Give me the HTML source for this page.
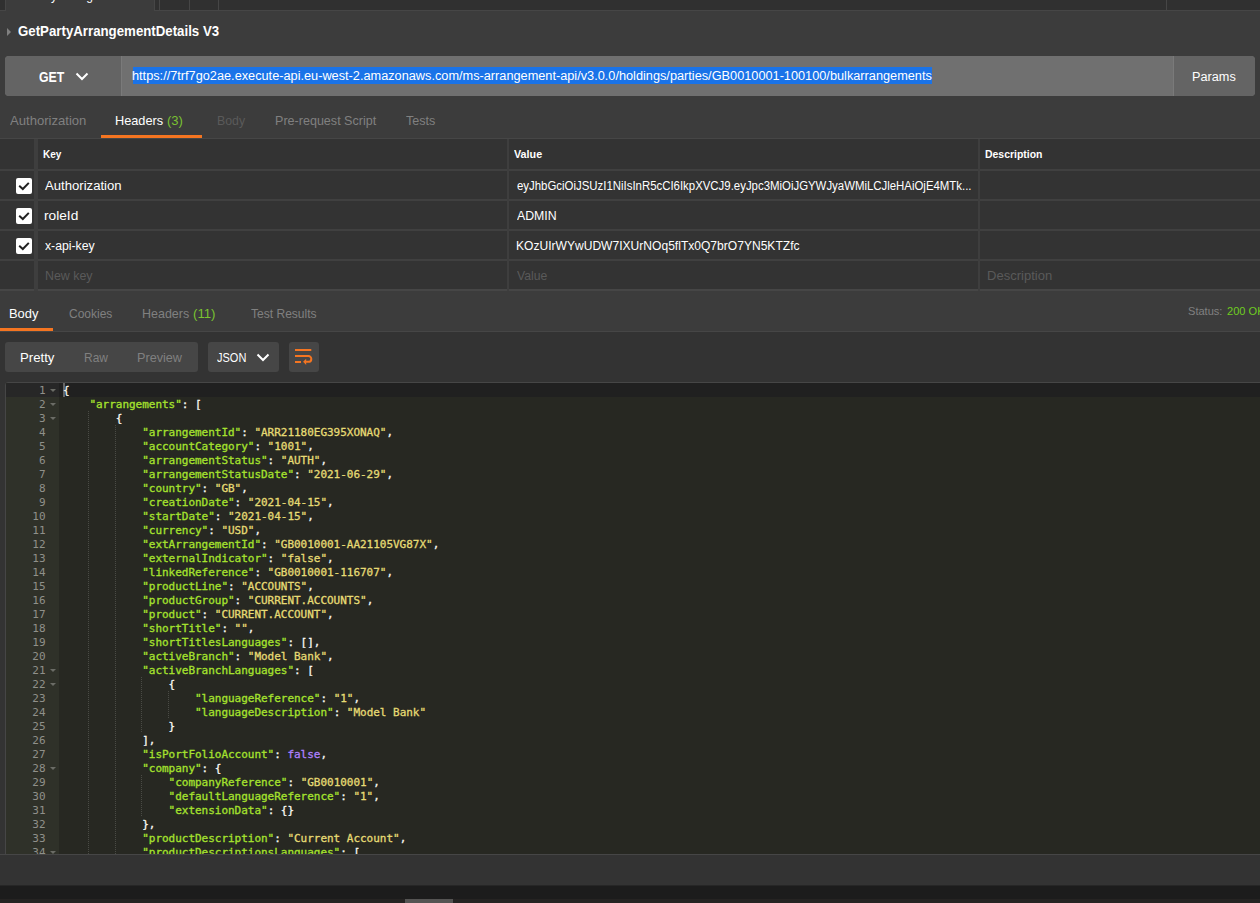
<!DOCTYPE html>
<html><head><meta charset="utf-8"><title>Postman</title>
<style>
*{box-sizing:border-box;margin:0;padding:0}
html,body{width:1260px;height:903px;overflow:hidden;background:#3c3c3c;font-family:"Liberation Sans",sans-serif;color:#fff}
.abs,#root div,#root span.a{position:absolute}
#root{position:relative;width:1260px;height:903px;overflow:hidden;background:#3c3c3c}
#tabstrip{left:0;top:0;width:1260px;height:11px;background:#303030;border-bottom:1px solid #464646}
#acttab{left:5px;top:0;width:150px;height:11px;background:#3c3c3c;border-left:1px solid #464646;border-right:1px solid #464646;overflow:hidden}
#acttab span{position:absolute;left:3.6px;top:-10.2px;font-size:12px;line-height:12px;color:#fff;white-space:nowrap}
.tsep{top:0;width:1px;height:10px;background:#464646}
#tri{left:7px;top:28px;width:0;height:0;border-left:4px solid #808080;border-top:4px solid transparent;border-bottom:4px solid transparent}
#title{left:18px;top:22px;font-size:14px;font-weight:bold;line-height:18px;white-space:nowrap;color:#fff}
#urlbar{left:5px;top:56px;width:1250px;height:40px;background:#707070;border-radius:4px;overflow:hidden}
#method{left:0;top:0;width:117px;height:40px;background:#646464;border-right:1px solid #7a7a7a}
#method span{position:absolute;left:34px;top:11px;font-size:14px;font-weight:bold;line-height:18px}
#params{left:1168px;top:0;width:82px;height:40px;background:#646464;border-left:1px solid #7a7a7a}
#params span{position:absolute;left:19px;top:12px;font-size:12px;line-height:16px}
#sel{left:128px;top:11px;height:17px;width:799px;background:#1a73e8}
#url{left:128px;top:11px;height:17px;line-height:17px;font-size:12px;white-space:nowrap;color:#fff}
.rt{top:112px;font-size:13px;line-height:16px;white-space:nowrap;color:#808080}
#reqline{left:0;top:138px;width:1260px;height:1px;background:#464646}
.orange{background:#f57521}
.green{color:#7ac231}
#table{left:0;top:139px;width:1260px;height:152px;background:#333}
.hl{left:0;width:1260px;height:2px;background:#404040}
.vl{top:0;width:2px;height:152px;background:#3e3e3e}
.th{top:9px;font-size:11px;font-weight:bold;line-height:14px;color:#fff;white-space:nowrap}
.td{font-size:12px;line-height:16px;color:#fff;white-space:nowrap}
.ph{color:#5a5a5a}
.cb{left:16px;width:16px;height:16px;background:#fff;border-radius:2px}
#resptabs{left:0;top:291px;width:1260px;height:41px;background:#3c3c3c;border-bottom:1px solid #464646}
.rs{top:14px;font-size:13px;line-height:16px;white-space:nowrap;color:#808080}
#toolbar{left:0;top:332px;width:1260px;height:554px;background:#333}
.btn{top:10px;height:30px;background:#464646;border-radius:3px}
.btn span{position:absolute;top:7px;font-size:13px;line-height:16px;white-space:nowrap}
#edwrap{left:5px;top:382px;width:1260px;height:473px;border:1px solid #464646;border-radius:3px 0 0 0;background:#272822;overflow:hidden}
#editor{left:0;top:0;width:1258px;height:471px;background:#272822;overflow:hidden;font-family:"DejaVu Sans Mono","Liberation Mono",monospace;font-size:11px;letter-spacing:-0.0225px}
#gutter{left:0;top:0;width:53px;height:471px;background:#2f3129}
#actline{left:0;top:0;width:1258px;height:14px;background:#202020}
#gactline{left:0;top:0;width:53px;height:14px;background:#272727}
#cursor{left:57px;top:0;width:2px;height:14px;background:#666}
.ln{margin-top:1px;left:0;width:39.5px;text-align:right;color:#8f908a;height:14px;line-height:14px;font-size:11px}
.fold{left:44px;width:0;height:0;border-top:3px solid #6b6c66;border-left:3px solid transparent;border-right:3px solid transparent}
.cl{-webkit-text-stroke:0.3px;margin-top:1px;left:57px;height:14px;line-height:14px;white-space:pre;color:#f8f8f2;font-size:11px}
.ig{width:1px;height:14px;background-image:linear-gradient(#4a4b45 50%,transparent 50%);background-size:1px 2px}
.k{color:#a6e22e}.s{color:#e6db74}.c{color:#ae81ff}
#foot{left:0;top:854px;width:1260px;height:32px;background:#333;border-top:1px solid #464646}
#task{left:0;top:885px;width:1260px;height:18px;background:#1c1c1c;border-top:1px solid #262626}
#task2{left:0;top:899px;width:1260px;height:4px;background:#252322}
#taskblk{left:405px;top:899px;width:48px;height:4px;background:#555453}

.tx{white-space:nowrap;transform-origin:0 0}

</style></head><body>
<div id="root">
<div id="tabstrip"></div>
<div id="acttab"><span>GetPartyArrangementDet</span></div>
<div class="tsep" style="left:159px"></div>
<div class="tsep" style="left:189px"></div>
<div class="tsep" style="left:218px"></div>
<div class="tsep" style="left:1166px"></div>
<div id="tri"></div>
<div id="urlbar">
 <div id="method">
  <svg style="position:absolute;left:70px;top:16px" width="14" height="10" viewBox="0 0 14 10"><path d="M1.5 1.5 L7 7 L12.5 1.5" fill="none" stroke="#fff" stroke-width="2"/></svg>
 </div>
 <div id="sel"></div>
 <div id="params"></div>
</div>
<div id="reqline"></div>
<div class="orange" style="left:101px;top:135px;width:101px;height:3px"></div>
<div id="table">
 <div class="hl" style="top:30px"></div>
 <div class="hl" style="top:60px"></div>
 <div class="hl" style="top:90px"></div>
 <div class="hl" style="top:120px"></div>
 <div class="hl" style="top:150px;background:#464646"></div>
 <div class="vl" style="left:34px;width:4px"></div>
 <div class="vl" style="left:507px;width:2px"></div>
 <div class="vl" style="left:978px;width:2px"></div>
 <div class="cb" style="top:39px"><svg width="16" height="16" viewBox="0 0 16 16"><path d="M3.2 7.8 L6.8 11 L12.8 4.9" fill="none" stroke="#222" stroke-width="2"/></svg></div>
 <div class="cb" style="top:69px"><svg width="16" height="16" viewBox="0 0 16 16"><path d="M3.2 7.8 L6.8 11 L12.8 4.9" fill="none" stroke="#222" stroke-width="2"/></svg></div>
 <div class="cb" style="top:99px"><svg width="16" height="16" viewBox="0 0 16 16"><path d="M3.2 7.8 L6.8 11 L12.8 4.9" fill="none" stroke="#222" stroke-width="2"/></svg></div>
</div>
<div id="resptabs">
 <div class="orange" style="left:0;top:37px;width:53px;height:3px"></div>
</div>
<div id="toolbar">
 <div class="btn" style="left:5px;width:193px"></div>
 <div class="btn" style="left:208px;width:71px">
  <svg style="position:absolute;left:48px;top:11px" width="14" height="10" viewBox="0 0 14 10"><path d="M1.5 1.5 L7 7 L12.5 1.5" fill="none" stroke="#fff" stroke-width="2"/></svg>
 </div>
 <div class="btn" style="left:289px;width:30px">
  <svg style="position:absolute;left:0;top:0" width="30" height="30" viewBox="0 0 30 30"><path d="M6 8 H22.3 M6 14 H19.4 a2.9 2.9 0 0 1 0 5.8 H16.5 M6 19.9 H12" fill="none" stroke="#f57521" stroke-width="2"/><path d="M14.1 19.8 L17.2 16.7 V22.9 Z" fill="#f57521"/></svg>
 </div>
</div>
<div id="edwrap"><div id="editor">
 <div id="actline"></div>
 <div id="gutter"></div>
 <div id="gactline"></div>
 <div id="cursor"></div>
<div class="ln" style="top:0px">1</div>
<div class="fold" style="top:6px"></div>
<div class="ln" style="top:14px">2</div>
<div class="fold" style="top:20px"></div>
<div class="ln" style="top:28px">3</div>
<div class="fold" style="top:34px"></div>
<div class="ln" style="top:42px">4</div>
<div class="ln" style="top:56px">5</div>
<div class="ln" style="top:70px">6</div>
<div class="ln" style="top:84px">7</div>
<div class="ln" style="top:98px">8</div>
<div class="ln" style="top:112px">9</div>
<div class="ln" style="top:126px">10</div>
<div class="ln" style="top:140px">11</div>
<div class="ln" style="top:154px">12</div>
<div class="ln" style="top:168px">13</div>
<div class="ln" style="top:182px">14</div>
<div class="ln" style="top:196px">15</div>
<div class="ln" style="top:210px">16</div>
<div class="ln" style="top:224px">17</div>
<div class="ln" style="top:238px">18</div>
<div class="ln" style="top:252px">19</div>
<div class="ln" style="top:266px">20</div>
<div class="ln" style="top:280px">21</div>
<div class="fold" style="top:286px"></div>
<div class="ln" style="top:294px">22</div>
<div class="fold" style="top:300px"></div>
<div class="ln" style="top:308px">23</div>
<div class="ln" style="top:322px">24</div>
<div class="ln" style="top:336px">25</div>
<div class="ln" style="top:350px">26</div>
<div class="ln" style="top:364px">27</div>
<div class="ln" style="top:378px">28</div>
<div class="fold" style="top:384px"></div>
<div class="ln" style="top:392px">29</div>
<div class="ln" style="top:406px">30</div>
<div class="ln" style="top:420px">31</div>
<div class="ln" style="top:434px">32</div>
<div class="ln" style="top:448px">33</div>
<div class="ln" style="top:462px">34</div>
<div class="fold" style="top:468px"></div>
<div class="cl" style="top:0px">{</div>
<div class="cl" style="top:14px">    <span class="k">"arrangements"</span>: [</div>
<div class="cl" style="top:28px">        {</div>
<div class="ig" style="left:82.4px;top:28px"></div>
<div class="cl" style="top:42px">            <span class="k">"arrangementId"</span>: <span class="s">"ARR21180EG395XONAQ"</span>,</div>
<div class="ig" style="left:82.4px;top:42px"></div>
<div class="ig" style="left:108.8px;top:42px"></div>
<div class="cl" style="top:56px">            <span class="k">"accountCategory"</span>: <span class="s">"1001"</span>,</div>
<div class="ig" style="left:82.4px;top:56px"></div>
<div class="ig" style="left:108.8px;top:56px"></div>
<div class="cl" style="top:70px">            <span class="k">"arrangementStatus"</span>: <span class="s">"AUTH"</span>,</div>
<div class="ig" style="left:82.4px;top:70px"></div>
<div class="ig" style="left:108.8px;top:70px"></div>
<div class="cl" style="top:84px">            <span class="k">"arrangementStatusDate"</span>: <span class="s">"2021-06-29"</span>,</div>
<div class="ig" style="left:82.4px;top:84px"></div>
<div class="ig" style="left:108.8px;top:84px"></div>
<div class="cl" style="top:98px">            <span class="k">"country"</span>: <span class="s">"GB"</span>,</div>
<div class="ig" style="left:82.4px;top:98px"></div>
<div class="ig" style="left:108.8px;top:98px"></div>
<div class="cl" style="top:112px">            <span class="k">"creationDate"</span>: <span class="s">"2021-04-15"</span>,</div>
<div class="ig" style="left:82.4px;top:112px"></div>
<div class="ig" style="left:108.8px;top:112px"></div>
<div class="cl" style="top:126px">            <span class="k">"startDate"</span>: <span class="s">"2021-04-15"</span>,</div>
<div class="ig" style="left:82.4px;top:126px"></div>
<div class="ig" style="left:108.8px;top:126px"></div>
<div class="cl" style="top:140px">            <span class="k">"currency"</span>: <span class="s">"USD"</span>,</div>
<div class="ig" style="left:82.4px;top:140px"></div>
<div class="ig" style="left:108.8px;top:140px"></div>
<div class="cl" style="top:154px">            <span class="k">"extArrangementId"</span>: <span class="s">"GB0010001-AA21105VG87X"</span>,</div>
<div class="ig" style="left:82.4px;top:154px"></div>
<div class="ig" style="left:108.8px;top:154px"></div>
<div class="cl" style="top:168px">            <span class="k">"externalIndicator"</span>: <span class="s">"false"</span>,</div>
<div class="ig" style="left:82.4px;top:168px"></div>
<div class="ig" style="left:108.8px;top:168px"></div>
<div class="cl" style="top:182px">            <span class="k">"linkedReference"</span>: <span class="s">"GB0010001-116707"</span>,</div>
<div class="ig" style="left:82.4px;top:182px"></div>
<div class="ig" style="left:108.8px;top:182px"></div>
<div class="cl" style="top:196px">            <span class="k">"productLine"</span>: <span class="s">"ACCOUNTS"</span>,</div>
<div class="ig" style="left:82.4px;top:196px"></div>
<div class="ig" style="left:108.8px;top:196px"></div>
<div class="cl" style="top:210px">            <span class="k">"productGroup"</span>: <span class="s">"CURRENT.ACCOUNTS"</span>,</div>
<div class="ig" style="left:82.4px;top:210px"></div>
<div class="ig" style="left:108.8px;top:210px"></div>
<div class="cl" style="top:224px">            <span class="k">"product"</span>: <span class="s">"CURRENT.ACCOUNT"</span>,</div>
<div class="ig" style="left:82.4px;top:224px"></div>
<div class="ig" style="left:108.8px;top:224px"></div>
<div class="cl" style="top:238px">            <span class="k">"shortTitle"</span>: <span class="s">""</span>,</div>
<div class="ig" style="left:82.4px;top:238px"></div>
<div class="ig" style="left:108.8px;top:238px"></div>
<div class="cl" style="top:252px">            <span class="k">"shortTitlesLanguages"</span>: [],</div>
<div class="ig" style="left:82.4px;top:252px"></div>
<div class="ig" style="left:108.8px;top:252px"></div>
<div class="cl" style="top:266px">            <span class="k">"activeBranch"</span>: <span class="s">"Model Bank"</span>,</div>
<div class="ig" style="left:82.4px;top:266px"></div>
<div class="ig" style="left:108.8px;top:266px"></div>
<div class="cl" style="top:280px">            <span class="k">"activeBranchLanguages"</span>: [</div>
<div class="ig" style="left:82.4px;top:280px"></div>
<div class="ig" style="left:108.8px;top:280px"></div>
<div class="cl" style="top:294px">                {</div>
<div class="ig" style="left:82.4px;top:294px"></div>
<div class="ig" style="left:108.8px;top:294px"></div>
<div class="ig" style="left:135.2px;top:294px"></div>
<div class="cl" style="top:308px">                    <span class="k">"languageReference"</span>: <span class="s">"1"</span>,</div>
<div class="ig" style="left:82.4px;top:308px"></div>
<div class="ig" style="left:108.8px;top:308px"></div>
<div class="ig" style="left:135.2px;top:308px"></div>
<div class="ig" style="left:161.6px;top:308px"></div>
<div class="cl" style="top:322px">                    <span class="k">"languageDescription"</span>: <span class="s">"Model Bank"</span></div>
<div class="ig" style="left:82.4px;top:322px"></div>
<div class="ig" style="left:108.8px;top:322px"></div>
<div class="ig" style="left:135.2px;top:322px"></div>
<div class="ig" style="left:161.6px;top:322px"></div>
<div class="cl" style="top:336px">                }</div>
<div class="ig" style="left:82.4px;top:336px"></div>
<div class="ig" style="left:108.8px;top:336px"></div>
<div class="ig" style="left:135.2px;top:336px"></div>
<div class="cl" style="top:350px">            ],</div>
<div class="ig" style="left:82.4px;top:350px"></div>
<div class="ig" style="left:108.8px;top:350px"></div>
<div class="cl" style="top:364px">            <span class="k">"isPortFolioAccount"</span>: <span class="c">false</span>,</div>
<div class="ig" style="left:82.4px;top:364px"></div>
<div class="ig" style="left:108.8px;top:364px"></div>
<div class="cl" style="top:378px">            <span class="k">"company"</span>: {</div>
<div class="ig" style="left:82.4px;top:378px"></div>
<div class="ig" style="left:108.8px;top:378px"></div>
<div class="cl" style="top:392px">                <span class="k">"companyReference"</span>: <span class="s">"GB0010001"</span>,</div>
<div class="ig" style="left:82.4px;top:392px"></div>
<div class="ig" style="left:108.8px;top:392px"></div>
<div class="ig" style="left:135.2px;top:392px"></div>
<div class="cl" style="top:406px">                <span class="k">"defaultLanguageReference"</span>: <span class="s">"1"</span>,</div>
<div class="ig" style="left:82.4px;top:406px"></div>
<div class="ig" style="left:108.8px;top:406px"></div>
<div class="ig" style="left:135.2px;top:406px"></div>
<div class="cl" style="top:420px">                <span class="k">"extensionData"</span>: {}</div>
<div class="ig" style="left:82.4px;top:420px"></div>
<div class="ig" style="left:108.8px;top:420px"></div>
<div class="ig" style="left:135.2px;top:420px"></div>
<div class="cl" style="top:434px">            },</div>
<div class="ig" style="left:82.4px;top:434px"></div>
<div class="ig" style="left:108.8px;top:434px"></div>
<div class="cl" style="top:448px">            <span class="k">"productDescription"</span>: <span class="s">"Current Account"</span>,</div>
<div class="ig" style="left:82.4px;top:448px"></div>
<div class="ig" style="left:108.8px;top:448px"></div>
<div class="cl" style="top:462px">            <span class="k">"productDescriptionsLanguages"</span>: [</div>
<div class="ig" style="left:82.4px;top:462px"></div>
<div class="ig" style="left:108.8px;top:462px"></div>
</div></div>
<div id="foot"></div>
<div id="task"></div>
<div id="task2"></div>
<div id="taskblk"></div>
<div class="tx" style="left:18.00px;top:24.15px;font-size:14px;line-height:14px;font-weight:bold;color:#fff;transform:scaleX(0.9469)">GetPartyArrangementDetails V3</div>
<div class="tx" style="left:39.00px;top:70.15px;font-size:14px;line-height:14px;font-weight:bold;color:#fff;transform:scaleX(0.8793)">GET</div>
<div class="tx" style="left:132.34px;top:70.04px;font-size:12px;line-height:12px;color:#fff;transform:scaleX(1.0611)">https://7trf7go2ae.execute-api.eu-west-2.amazonaws.com/ms-arrangement-api/v3.0.0/holdings/parties/GB0010001-100100/bulkarrangements</div>
<div class="tx" style="left:1191.64px;top:70.84px;font-size:12px;line-height:12px;color:#fff;transform:scaleX(1.0575)">Params</div>
<div class="tx" style="left:10.00px;top:113.80px;font-size:13px;line-height:13px;color:#808080;transform:scaleX(1.0067)">Authorization</div>
<div class="tx" style="left:115.02px;top:113.80px;font-size:13px;line-height:13px;color:#fff;transform:scaleX(0.9792)">Headers</div>
<div class="tx" style="left:167.00px;top:113.80px;font-size:13px;line-height:13px;color:#7ac231;transform:scaleX(1.0)">(3)</div>
<div class="tx" style="left:216.55px;top:113.80px;font-size:13px;line-height:13px;color:#5a5a5a;transform:scaleX(0.9483)">Body</div>
<div class="tx" style="left:274.53px;top:113.80px;font-size:13px;line-height:13px;color:#808080;transform:scaleX(0.9663)">Pre-request Script</div>
<div class="tx" style="left:406.00px;top:113.80px;font-size:13px;line-height:13px;color:#808080;transform:scaleX(0.9667)">Tests</div>
<div class="tx" style="left:43.00px;top:150.23px;font-size:10px;line-height:10px;font-weight:bold;color:#fff;transform:scaleX(1.0)">Key</div>
<div class="tx" style="left:514.00px;top:150.23px;font-size:10px;line-height:10px;font-weight:bold;color:#fff;transform:scaleX(1.0769)">Value</div>
<div class="tx" style="left:984.56px;top:150.23px;font-size:10px;line-height:10px;font-weight:bold;color:#fff;transform:scaleX(1.0436)">Description</div>
<div class="tx" style="left:45.00px;top:179.84px;font-size:12px;line-height:12px;color:#fff;transform:scaleX(1.0942)">Authorization</div>
<div class="tx" style="left:44.26px;top:209.84px;font-size:12px;line-height:12px;color:#fff;transform:scaleX(1.1429)">roleId</div>
<div class="tx" style="left:45.00px;top:240.34px;font-size:12px;line-height:12px;color:#fff;transform:scaleX(1.0204)">x-api-key</div>
<div class="tx" style="left:45.17px;top:270.34px;font-size:12px;line-height:12px;color:#5a5a5a;transform:scaleX(1.0333)">New key</div>
<div class="tx" style="left:516.50px;top:179.84px;font-size:12px;line-height:12px;color:#fff;transform:scaleX(0.9507)">eyJhbGciOiJSUzI1NiIsInR5cCI6IkpXVCJ9.eyJpc3MiOiJGYWJyaWMiLCJleHAiOjE4MTk...</div>
<div class="tx" style="left:516.50px;top:209.84px;font-size:12px;line-height:12px;color:#fff;transform:scaleX(1.0263)">ADMIN</div>
<div class="tx" style="left:516.49px;top:240.34px;font-size:12px;line-height:12px;color:#fff;transform:scaleX(1.0053)">KOzUIrWYwUDW7IXUrNOq5flTx0Q7brO7YN5KTZfc</div>
<div class="tx" style="left:516.50px;top:270.34px;font-size:12px;line-height:12px;color:#5a5a5a;transform:scaleX(1.0167)">Value</div>
<div class="tx" style="left:986.91px;top:270.34px;font-size:12px;line-height:12px;color:#5a5a5a;transform:scaleX(1.0862)">Description</div>
<div class="tx" style="left:9.41px;top:307.30px;font-size:13px;line-height:13px;color:#fff;transform:scaleX(0.9931)">Body</div>
<div class="tx" style="left:68.60px;top:307.30px;font-size:13px;line-height:13px;color:#808080;transform:scaleX(0.9234)">Cookies</div>
<div class="tx" style="left:141.54px;top:307.30px;font-size:13px;line-height:13px;color:#808080;transform:scaleX(0.9604)">Headers</div>
<div class="tx" style="left:192.99px;top:307.30px;font-size:13px;line-height:13px;color:#7ac231;transform:scaleX(1.0143)">(11)</div>
<div class="tx" style="left:250.60px;top:307.30px;font-size:13px;line-height:13px;color:#808080;transform:scaleX(0.9268)">Test Results</div>
<div class="tx" style="left:1188.09px;top:306.39px;font-size:11px;line-height:11px;color:#808080;transform:scaleX(1.0061)">Status:</div>
<div class="tx" style="left:1227.00px;top:306.39px;font-size:11px;line-height:11px;color:#6fcc1f;transform:scaleX(1.0061)">200 OK</div>
<div class="tx" style="left:20.38px;top:351.00px;font-size:13px;line-height:13px;color:#fff;transform:scaleX(1.0152)">Pretty</div>
<div class="tx" style="left:83.68px;top:351.00px;font-size:13px;line-height:13px;color:#808080;transform:scaleX(0.92)">Raw</div>
<div class="tx" style="left:137.03px;top:351.00px;font-size:13px;line-height:13px;color:#808080;transform:scaleX(0.9733)">Preview</div>
<div class="tx" style="left:216.90px;top:351.00px;font-size:13px;line-height:13px;color:#fff;transform:scaleX(0.8471)">JSON</div>
</div>

</body></html>
